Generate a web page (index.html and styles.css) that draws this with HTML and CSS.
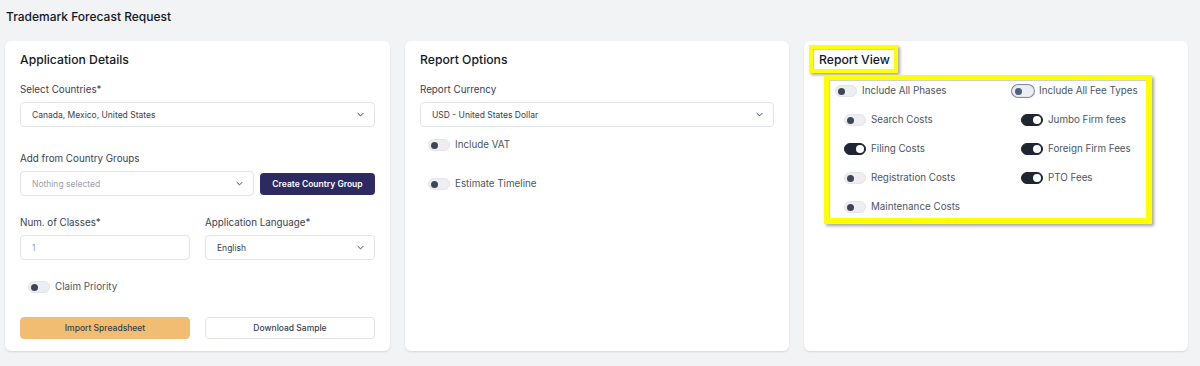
FILE: index.html
```html
<!DOCTYPE html>
<html>
<head>
<meta charset="utf-8">
<link rel="stylesheet" href="styles.css">
</head>
<body>
<div class="page">
  <h1 class="title">Trademark Forecast Request</h1>
  <div class="cards">
    <section class="card">
      <h2 class="card-title">Application Details</h2>
      <label class="label">Select Countries*</label>
      <div class="select">
        <span>Canada, Mexico, United States</span>
        <svg class="chev" viewBox="0 0 10 6"><polyline points="1,1 5,5 9,1"/></svg>
      </div>
      <label class="label label-gap">Add from Country Groups</label>
      <div class="row-group">
        <div class="select grow">
          <span class="placeholder">Nothing selected</span>
          <svg class="chev" viewBox="0 0 10 6"><polyline points="1,1 5,5 9,1"/></svg>
        </div>
        <button class="btn btn-dark">Create Country Group</button>
      </div>
      <div class="two-col">
        <div>
          <label class="label">Num. of Classes*</label>
          <div class="input"><span class="placeholder">1</span></div>
        </div>
        <div>
          <label class="label">Application Language*</label>
          <div class="select">
            <span>English</span>
            <svg class="chev" viewBox="0 0 10 6"><polyline points="1,1 5,5 9,1"/></svg>
          </div>
        </div>
      </div>
      <div class="toggle-row claim"><span class="toggle"></span><span>Claim Priority</span></div>
      <div class="two-col buttons">
        <button class="btn btn-orange">Import Spreadsheet</button>
        <button class="btn btn-light">Download Sample</button>
      </div>
    </section>

    <section class="card">
      <h2 class="card-title">Report Options</h2>
      <label class="label">Report Currency</label>
      <div class="select">
        <span>USD - United States Dollar</span>
        <svg class="chev" viewBox="0 0 10 6"><polyline points="1,1 5,5 9,1"/></svg>
      </div>
      <div class="toggle-row vat"><span class="toggle"></span><span>Include VAT</span></div>
      <div class="toggle-row timeline"><span class="toggle"></span><span>Estimate Timeline</span></div>
    </section>

    <section class="card card-view">
      <h2 class="card-title">Report View</h2>
      <div class="view-grid">
        <div class="col">
          <div class="toggle-row"><span class="toggle"></span><span>Include All Phases</span></div>
          <div class="toggle-row sub"><span class="toggle"></span><span>Search Costs</span></div>
          <div class="toggle-row sub"><span class="toggle on"></span><span>Filing Costs</span></div>
          <div class="toggle-row sub"><span class="toggle"></span><span>Registration Costs</span></div>
          <div class="toggle-row sub"><span class="toggle"></span><span>Maintenance Costs</span></div>
        </div>
        <div class="col">
          <div class="toggle-row"><span class="toggle focus"></span><span>Include All Fee Types</span></div>
          <div class="toggle-row sub"><span class="toggle on"></span><span>Jumbo Firm fees</span></div>
          <div class="toggle-row sub"><span class="toggle on"></span><span>Foreign Firm Fees</span></div>
          <div class="toggle-row sub"><span class="toggle on"></span><span>PTO Fees</span></div>
        </div>
      </div>
      <div class="mark mark-title"></div>
      <div class="mark mark-grid"></div>
    </section>
  </div>
</div>
</body>
</html>
```

FILE: styles.css
```css
* { box-sizing: border-box; }
html, body { margin: 0; padding: 0; }
body {
  background: #f2f3f5;
  font-family: Inter, "Noto Sans", sans-serif;
  color: #374151;
  width: 1200px;
  height: 366px;
  overflow: hidden;
}
.page {
  padding: 8px 12px 0 5px;
}
.title {
  margin: 0 0 0 1px;
  font-size: 12px;
  font-weight: 500;
  line-height: 18px;
  color: #111827;
}
.cards {
  margin-top: 15px;
  display: grid;
  grid-template-columns: 385px 384px 384px;
  column-gap: 15px;
}
.card {
  position: relative;
  background: #fff;
  border-radius: 6px;
  height: 310px;
  padding: 11px 15px 0 15px;
  box-shadow: 0 1px 2px rgba(0,0,0,0.12);
}
.card-title {
  margin: 0;
  font-size: 12.2px;
  font-weight: 500;
  line-height: 16px;
  color: #111827;
}
.label {
  display: block;
  margin-top: 15px;
  font-size: 9.8px;
  line-height: 14px;
  color: #374151;
  margin-bottom: 5px;
}
.label-gap { margin-top: 25px; }
.select, .input {
  height: 25px;
  border: 1px solid #e1e4e8;
  border-radius: 4px;
  display: flex;
  align-items: center;
  justify-content: space-between;
  padding: 0 10px 0 11px;
  font-size: 8.5px;
  color: #374151;
  background: #fff;
}
.placeholder { color: #9aa0a9; }
.chev {
  width: 7px;
  height: 5px;
  fill: none;
  stroke: #374151;
  stroke-width: 1.4;
}
.row-group {
  display: flex;
  gap: 6px;
  align-items: center;
}
.grow { flex: 1; }
.btn {
  font-family: Inter, "Noto Sans", sans-serif;
  font-size: 8.5px;
  border-radius: 4px;
  height: 22px;
  padding: 0;
  cursor: pointer;
}
.btn-dark {
  width: 115px;
  background: #2d2a62;
  color: #fff;
  border: none;
  font-weight: 600;
}
.two-col {
  display: grid;
  grid-template-columns: 170px 170px;
  column-gap: 15px;
}
.two-col .label { margin-top: 20px; }
.btn-orange {
  background: #f0bd72;
  border: 1px solid #f0bd72;
  color: #374151;
  font-weight: 500;
}
.btn-light {
  background: #fff;
  border: 1px solid #e1e4e8;
  color: #374151;
  font-weight: 500;
}
.buttons { margin-top: 23px; }
.toggle-row {
  display: flex;
  align-items: center;
  gap: 5px;
  font-size: 9.8px;
  line-height: 14px;
  color: #4b5563;
  height: 14px;
}
.toggle {
  position: relative;
  width: 22px;
  height: 12px;
  border-radius: 6px;
  background: #eceef1;
  border: 1px solid #e2e5e9;
  flex: none;
}
.toggle::after {
  content: "";
  position: absolute;
  left: 2px;
  top: 1.5px;
  width: 7px;
  height: 7px;
  border-radius: 50%;
  background: #3d4556;
}
.toggle.on {
  background: #1f2632;
  border-color: #1f2632;
}
.toggle.on::after {
  left: auto;
  right: 1.5px;
  top: 1px;
  width: 8px;
  height: 8px;
  background: #fff;
}
.toggle.focus {
  box-shadow: 0 0 0 1px #7a8aa8;
}
.toggle.focus::after { background: #4c5f86; }
.claim { margin: 20px 0 0 8px; }
.vat { margin: 11px 0 0 8px; }
.timeline { margin: 25px 0 0 8px; }

.view-grid {
  display: grid;
  grid-template-columns: 177px 160px;
  margin: 16px 0 0 16px;
}
.col { display: flex; flex-direction: column; gap: 15px; }
.sub { margin-left: 9px; }

.mark {
  position: absolute;
  border: 4px solid #ffff00;
  box-shadow: 2px 2px 3px rgba(0,0,0,0.35), inset 1px 1px 1px rgba(0,0,0,0.2);
  pointer-events: none;
}
.mark-title {
  left: 5px;
  top: 4px;
  width: 89px;
  height: 28px;
}
.mark-grid {
  left: 20px;
  top: 34px;
  width: 328px;
  height: 149px;
  border-width: 5px 6px 6px 5px;
}
```
